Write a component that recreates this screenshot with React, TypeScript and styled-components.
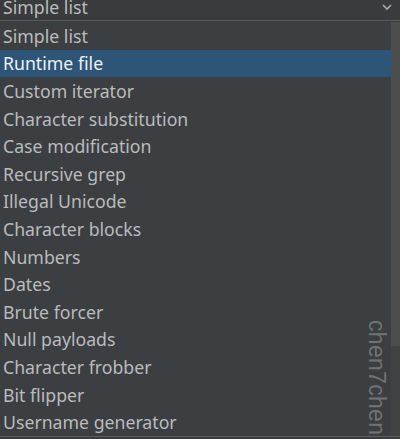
import React from "react";
import styled, { createGlobalStyle } from "styled-components";

const Global = createGlobalStyle`
  html, body { margin: 0; padding: 0; background: #2f3133; }
  body { font-family: "Noto Sans", "Open Sans", sans-serif; overflow: hidden; }
`;

const Frame = styled.div`
  width: 400px;
  height: 439px;
  position: relative;
  overflow: hidden;
  background: #3a3c3e;
  display: flex;
  flex-direction: column;
`;

const Combo = styled.div`
  height: 20px;
  flex: none;
  display: flex;
  align-items: flex-end;
  justify-content: space-between;
  overflow: hidden;
  background: #393b3d;
  border-bottom: 1px solid #4e5b68;
  padding: 0 8px 0 3px;
`;

const ComboLabel = styled.span`
  font-size: 17.7px;
  line-height: 27px;
  height: 27px;
  margin-bottom: -1px;
  color: #b9bbbd;
  flex: none;
`;

const Chevron = styled.svg`
  align-self: flex-start;
  margin-top: 4px;
  width: 10px;
  height: 7px;
`;

const Popup = styled.div`
  margin-top: 1px;
  height: 414px;
  flex: none;
  display: flex;
  background: #3c3f41;
  border-bottom: 1px solid #5c5e60;
`;

const List = styled.ul`
  list-style: none;
  margin: 0;
  padding: 0;
  flex: 1;
  display: flex;
  flex-direction: column;
`;

const Row = styled.li<{ $selected?: boolean }>`
  height: 27.6px;
  flex: none;
  display: flex;
  align-items: center;
  padding-left: 3px;
  font-size: 17.7px;
  white-space: nowrap;
  color: ${(p) => (p.$selected ? "#eef0f2" : "#b9bbbd")};
  background: ${(p) => (p.$selected ? "#2d5578" : "transparent")};
`;

const Track = styled.div`
  width: 9px;
  flex: none;
  background: #404244;
  display: flex;
  flex-direction: column;
`;

const Thumb = styled.div`
  height: 324px;
  background: #4b4d4f;
`;

const Watermark = styled.div`
  position: absolute;
  left: 363px;
  top: 320px;
  writing-mode: vertical-rl;
  font-family: "Liberation Sans", Arial, sans-serif;
  font-size: 23px;
  letter-spacing: 0.3px;
  color: rgba(160, 160, 160, 0.55);
  white-space: nowrap;
`;

const items = [
  "Simple list",
  "Runtime file",
  "Custom iterator",
  "Character substitution",
  "Case modification",
  "Recursive grep",
  "Illegal Unicode",
  "Character blocks",
  "Numbers",
  "Dates",
  "Brute forcer",
  "Null payloads",
  "Character frobber",
  "Bit flipper",
  "Username generator",
];

export default function App() {
  return (
    <>
      <Global />
      <Frame>
        <Combo>
          <ComboLabel>Simple list</ComboLabel>
          <Chevron viewBox="0 0 10 7">
            <path d="M1 1 L5 5 L9 1" fill="none" stroke="#a9abad" strokeWidth="1.6" />
          </Chevron>
        </Combo>
        <Popup>
          <List>
            {items.map((it, i) => (
              <Row key={it} $selected={i === 1}>
                {it}
              </Row>
            ))}
          </List>
          <Track>
            <Thumb />
          </Track>
        </Popup>
        <Watermark>chen7chen</Watermark>
      </Frame>
    </>
  );
}
